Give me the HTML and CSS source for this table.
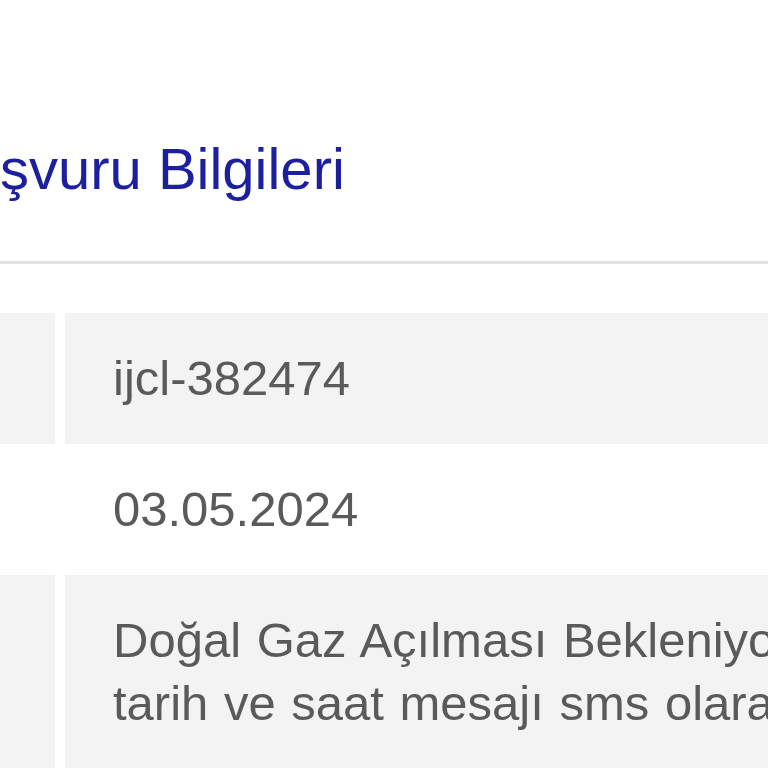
FILE: index.html
```html
<!DOCTYPE html>
<html lang="tr">

<head>
    <meta charset="UTF-8">
    <meta name="viewport" content="width=device-width, initial-scale=1.0">
    <title>Başvuru Bilgileri</title>
    <link rel="stylesheet" href="styles.css">
</head>

<body>
    <div class="page">
        <div class="page-header">
            <h1 class="title">Başvuru Bilgileri</h1>
        </div>

        <div class="info-table">
            <div class="info-row shaded">
                <div class="info-label">Başvuru No</div>
                <div class="info-value">ijcl-382474</div>
            </div>
            <div class="info-row">
                <div class="info-label">Başvuru Tarihi</div>
                <div class="info-value">03.05.2024</div>
            </div>
            <div class="info-row shaded">
                <div class="info-label">Durum</div>
                <div class="info-value">Doğal Gaz Açılması Bekleniyor. Açılış için belirlenen<br>tarih ve saat mesajı sms olarak gönderilecektir.</div>
            </div>
        </div>
    </div>
</body>

</html>
```

FILE: styles.css
```css
html,
body {
    margin: 0;
    overflow: hidden;
    background-color: #fff;
}

body {
    font-family: "Liberation Sans", Arial, sans-serif;
}

.page {
    width: 1600px;
}

.page-header {
    border-bottom: 3px solid #e2e2e2;
    padding-bottom: 59px;
}

.title {
    margin: 135px 0 0 -71px;
    font-size: 58px;
    font-weight: normal;
    color: #1c1f9e;
    line-height: normal;
}

.info-table {
    margin: 49px 0 0 -405px;
}

.info-row {
    display: grid;
    grid-template-columns: 460px 1fr;
    column-gap: 10px;
}

.info-label,
.info-value {
    padding: 34px 48px;
    font-size: 49px;
    line-height: 63px;
    color: #5a5a5a;
    word-spacing: 2px;
}

.info-row.shaded .info-label,
.info-row.shaded .info-value {
    background-color: #f3f3f3;
}
```
